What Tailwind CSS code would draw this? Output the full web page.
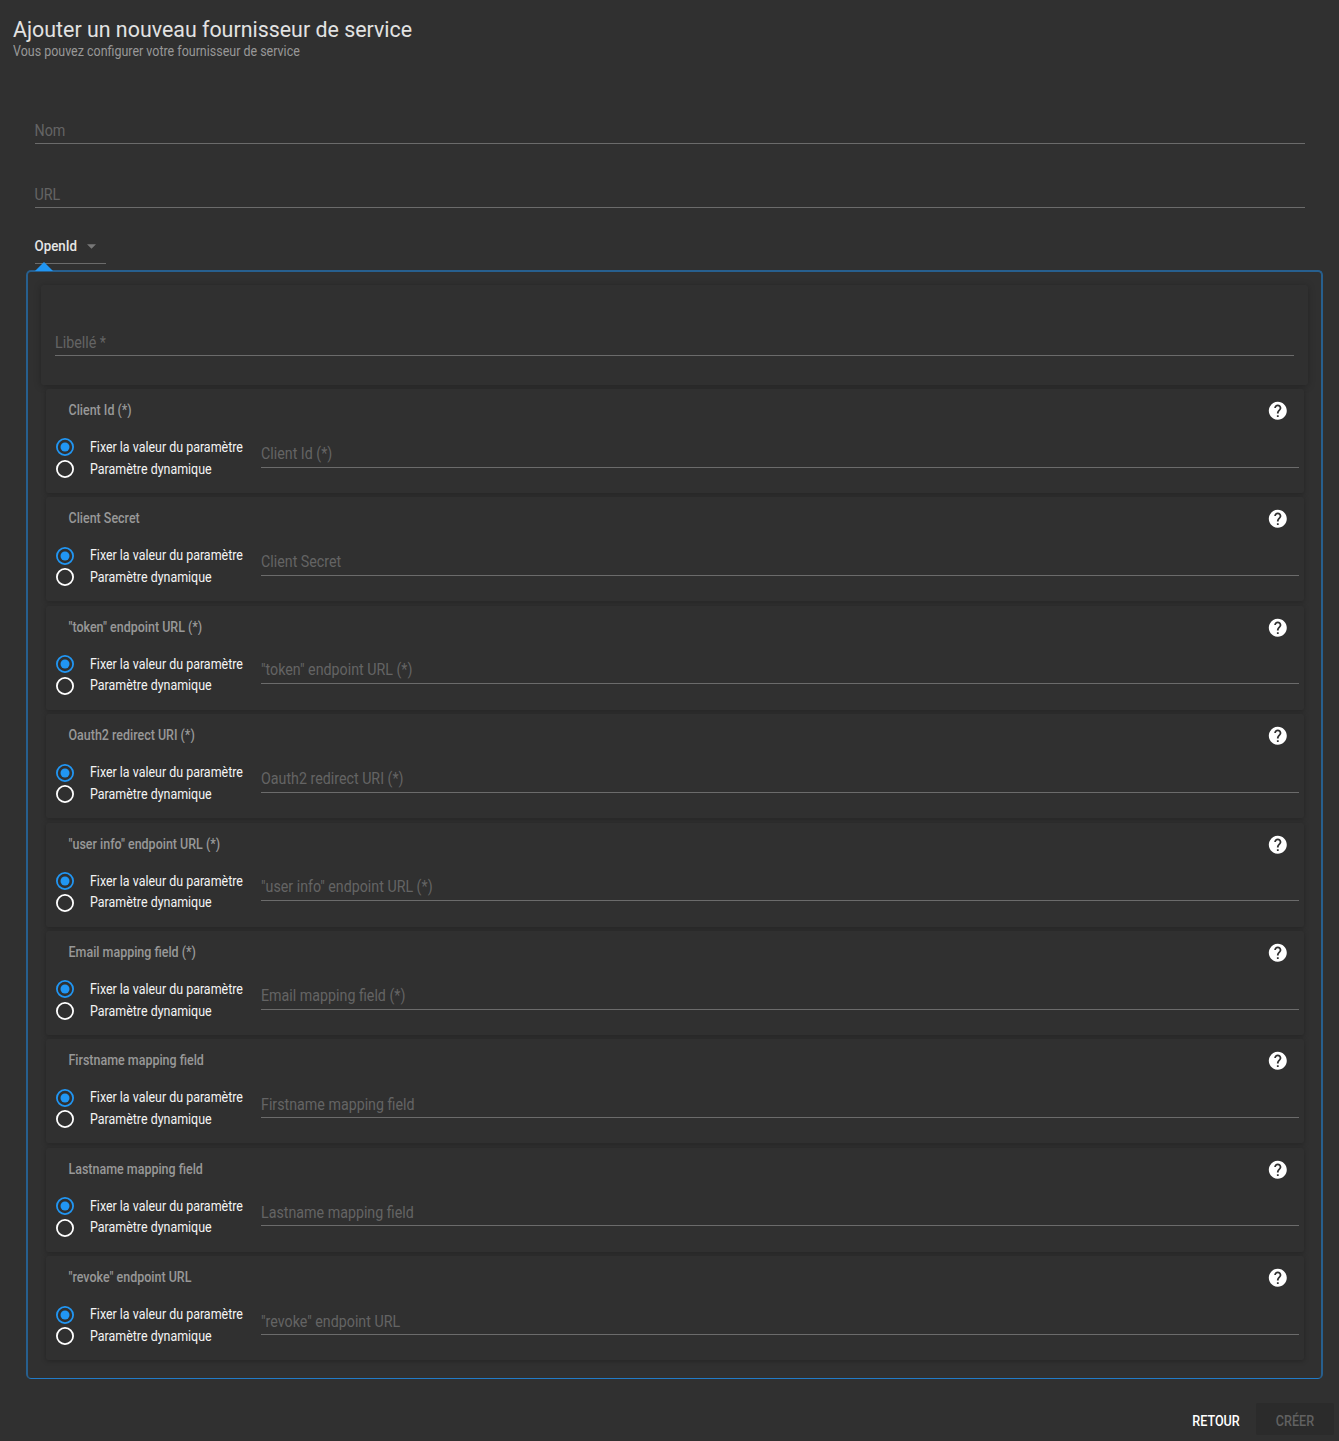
<!DOCTYPE html>
<html lang="fr">
<head>
<meta charset="utf-8">
<title>Ajouter un nouveau fournisseur de service</title>
<script src="https://cdn.jsdelivr.net/npm/@tailwindcss/browser@4"></script>
</head>
<body class="bg-[#303030] text-white font-[Roboto,sans-serif] h-[1441px] overflow-hidden">
<header class="pl-[13px] pt-[16px]">
  <h1 class="text-[21.4px] leading-[27px] text-[#e2e2e2]">Ajouter un nouveau fournisseur de service</h1>
  <p class="pt-px -mb-px text-[12.48px] leading-[16px] text-[#989898] scale-y-[1.11]">Vous pouvez configurer votre fournisseur de service</p>
</header>
<main>
  <div class="ml-[34.5px] mr-[34px] mt-[59px] h-[26px] border-b border-[#6b6b6b] text-[14.3px] leading-[27px] text-[#646464]"><span class="inline-block scale-y-[1.1]">Nom</span></div>
  <div class="ml-[34.5px] mr-[34px] mt-[38px] h-[26px] border-b border-[#6b6b6b] text-[14.3px] leading-[27px] text-[#646464]"><span class="inline-block scale-y-[1.1]">URL</span></div>
  <div class="ml-[34.5px] mt-[21px] w-[71px] h-[35px] border-b border-[#6b6b6b] flex items-center justify-between pr-[10px]">
    <span class="pt-[2px] text-[13.3px] font-medium text-[#e6e6e6] scale-y-[1.06]">OpenId</span>
    <svg class="w-[9px] h-[5px]" viewBox="0 0 10 5"><path d="M0 0h10L5 5z" fill="#777"/></svg>
  </div>
  <section class="relative ml-[26px] mr-[16px] mt-[6px] h-[1109px] border-2 border-b border-[#275f8e] border-b-[#227bc7] rounded-[5px] pt-[13px]">
    <svg class="absolute left-[7px] -top-[10px] w-[18px] h-[9px]" viewBox="0 0 18 9"><path d="M0 9 9 0l9 9z" fill="#2196f3"/></svg>
    <div class="ml-[13px] mr-[13px] h-[100px] rounded-[2px] bg-[#303030] shadow-[0_1px_7px_rgba(0,0,0,0.25)] px-[14px] pt-[45px]">
      <div class="h-[26px] border-b border-[#6b6b6b] text-[14.3px] leading-[27px] text-[#646464]"><span class="inline-block scale-y-[1.1]">Libellé *</span></div>
    </div>
    <div id="parameters" class="mt-[4px] ml-[18px] mr-[17px] flex flex-col gap-[4.4px]"></div>
  </section>
</main>
<footer class="mt-[24px] mr-[5px] flex justify-end h-[32px] text-[12.6px] leading-[35px] font-medium">
  <button class="w-[80px]"><span class="inline-block scale-y-[1.12]">RETOUR</span></button>
  <button class="w-[78px] bg-[#2b2b2b] text-[#616161] rounded-[2px]"><span class="inline-block scale-y-[1.12]">CRÉER</span></button>
</footer>
<template id="parameter">
  <article class="h-[104px] rounded-[2px] bg-[#303030] shadow-[0_1px_5px_rgba(0,0,0,0.25)]">
    <div class="h-[47.6px] pl-[22.5px] pr-[15px] pt-[11px] flex items-start justify-between">
      <h2 data-label class="text-[12.48px] leading-[19.5px] font-medium text-[#989898] scale-y-[1.13]"></h2>
      <svg class="w-[21.6px] h-[21.6px]" viewBox="0 0 24 24" fill="white"><path d="M12 2C6.48 2 2 6.48 2 12s4.48 10 10 10 10-4.48 10-10S17.520 2 12 2zm1 17h-2v-2h2v2zm2.070-7.750l-.9.920C13.450 12.900 13 13.500 13 15h-2v-.5c0-1.100.45-2.100 1.170-2.830l1.240-1.260c.37-.36.590-.86.590-1.410 0-1.100-.9-2-2-2s-2 .9-2 2H8c0-2.210 1.790-4 4-4s4 1.790 4 4c0 .88-.36 1.680-.93 2.250z"/></svg>
    </div>
    <div class="flex pl-[10px] pr-[5px]">
      <div class="w-[205px]">
        <div class="h-[21.6px] flex items-center gap-[16px] text-[12.44px] text-[#f4f4f4]">
          <svg class="w-[18px] h-[18px]" viewBox="0 0 20 20"><circle cx="10" cy="10" r="9" fill="none" stroke="#2196f3" stroke-width="2"/><circle cx="10" cy="10" r="5" fill="#2196f3"/></svg>
          <span class="scale-y-[1.14]">Fixer la valeur du paramètre</span>
        </div>
        <div class="h-[21.6px] flex items-center gap-[16px] text-[12.44px] text-[#f4f4f4]">
          <svg class="w-[18px] h-[18px]" viewBox="0 0 20 20"><circle cx="10" cy="10" r="9" fill="none" stroke="white" stroke-width="2"/></svg>
          <span class="scale-y-[1.14]">Paramètre dynamique</span>
        </div>
      </div>
      <div class="mt-[5px] h-[26px] flex-1 border-b border-[#6b6b6b] text-[14.25px] leading-[24px] text-[#646464]"><span data-field class="inline-block scale-y-[1.1]"></span></div>
    </div>
  </article>
</template>
<script>
const names = ['Client Id (*)', 'Client Secret', '"token" endpoint URL (*)', 'Oauth2 redirect URI (*)', '"user info" endpoint URL (*)', 'Email mapping field (*)', 'Firstname mapping field', 'Lastname mapping field', '"revoke" endpoint URL'];
const template = document.getElementById('parameter');
for (const name of names) {
  const row = template.content.cloneNode(true);
  row.querySelector('[data-label]').textContent = name;
  row.querySelector('[data-field]').textContent = name;
  document.getElementById('parameters').append(row);
}
</script>
</body>
</html>
